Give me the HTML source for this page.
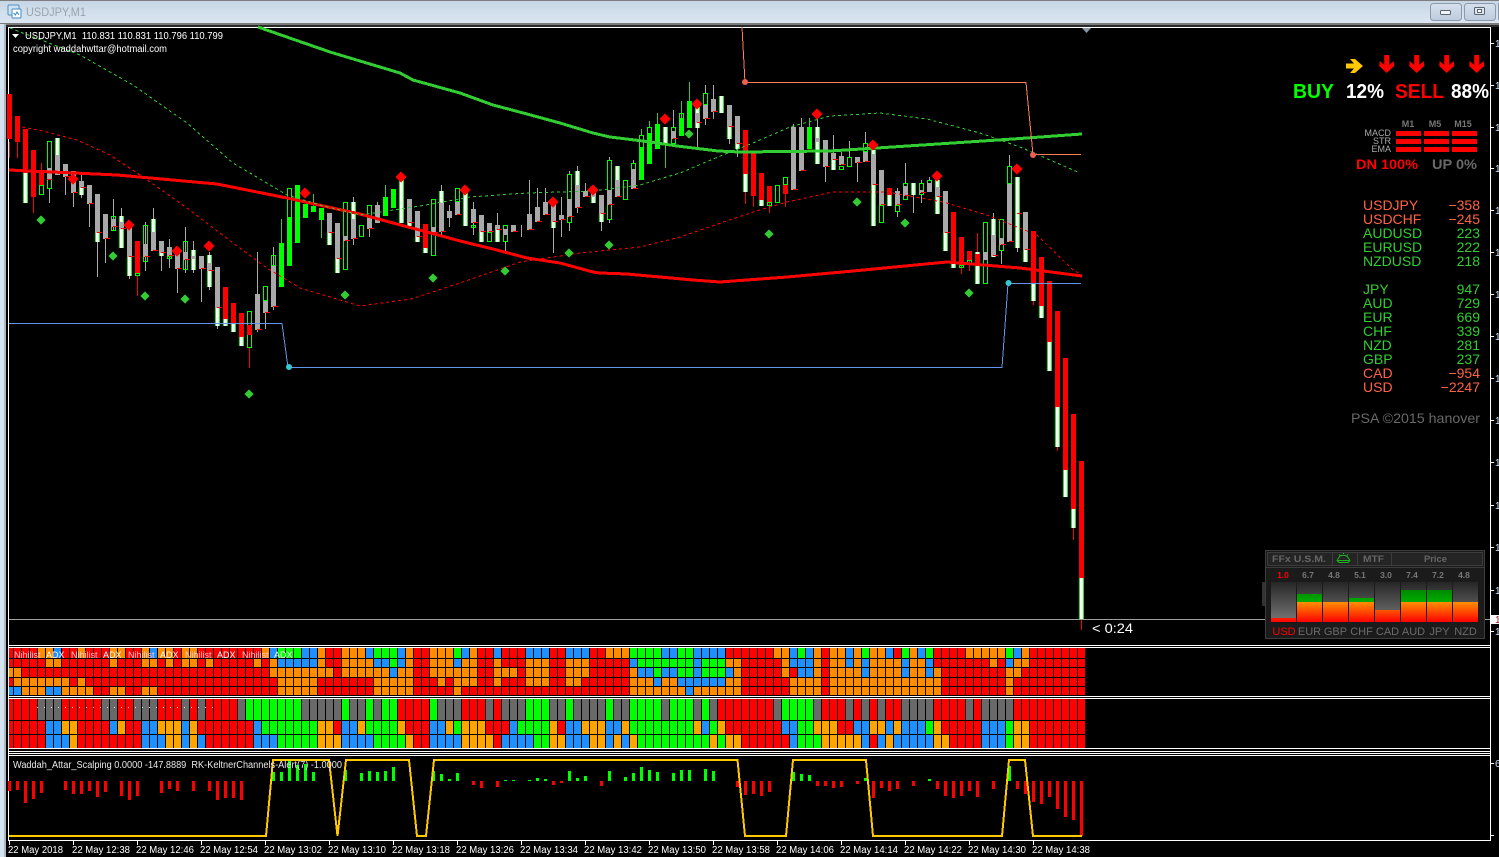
<!DOCTYPE html>
<html lang="en">
<head>
<meta charset="utf-8">
<title>USDJPY,M1</title>
<style>
html,body{margin:0;padding:0;background:#000;width:1499px;height:857px;overflow:hidden}
svg{display:block;font-family:"Liberation Sans",Arial,sans-serif}
.c{shape-rendering:crispEdges}
path{fill:none}
</style>
</head>
<body>
<svg xmlns="http://www.w3.org/2000/svg" width="1499" height="857" viewBox="0 0 1499 857">
<defs>
<linearGradient id="tb" x1="0" y1="0" x2="0" y2="1"><stop offset="0" stop-color="#c6d5e5"/><stop offset="1" stop-color="#dce7f2"/></linearGradient>
<linearGradient id="btn" x1="0" y1="0" x2="0" y2="1"><stop offset="0" stop-color="#d6e1ed"/><stop offset="1" stop-color="#bccbdc"/></linearGradient>
<linearGradient id="bg" gradientUnits="userSpaceOnUse" x1="0" y1="582" x2="0" y2="622"><stop offset="0" stop-color="#262626"/><stop offset="1" stop-color="#787878"/></linearGradient>
<linearGradient id="or" gradientUnits="userSpaceOnUse" x1="0" y1="602" x2="0" y2="622"><stop offset="0" stop-color="#ff9000"/><stop offset="1" stop-color="#ff0000"/></linearGradient>
<linearGradient id="gn" gradientUnits="userSpaceOnUse" x1="0" y1="590" x2="0" y2="602"><stop offset="0" stop-color="#008a00"/><stop offset="1" stop-color="#00ac00"/></linearGradient>
<path id="wg" d="M25.5 173V203M57.5 138V155M81.5 188V195M97.5 233V242M121.5 216V248M129.5 257V276M153.5 219V251M161.5 253V256M193.5 250V270M209.5 255V287M217.5 308V326M225.5 319V326M233.5 324V332M241.5 337V346M329.5 233V245M337.5 259V273M353.5 202V219M401.5 180V223M409.5 223V226M417.5 237V242M425.5 248V253M441.5 191V203M449.5 211V218M465.5 191V226M481.5 232V242M497.5 225V242M553.5 222V228M577.5 171V185M593.5 197V203M601.5 214V222M617.5 166V180M665.5 127V144M697.5 107V128M721.5 96V113M729.5 127V139M737.5 144V149M745.5 174V192M761.5 200V206M817.5 127V164M833.5 160V170M873.5 150V226M889.5 195V206M913.5 183V195M937.5 180V214M945.5 233V251M953.5 263V268M977.5 252V284M993.5 219V257M1017.5 177V248M1025.5 250V262M1033.5 284V301M1041.5 306V318M1049.5 342V371M1057.5 407V447M1065.5 470V497M1073.5 509V528M1081.5 578V619"/>
</defs>

<!-- window chrome -->
<rect width="1499" height="857" fill="#000"/>
<rect width="1499" height="24" fill="url(#tb)"/>
<rect width="1499" height="1" y="0" fill="#7d7d7d"/>
<rect y="23" width="1499" height="2" fill="#7a7a7a"/>
<rect y="25" width="1499" height="2" fill="#2a2a2a"/>
<rect x="0" y="24" width="4" height="833" fill="#d4e1ef"/>
<rect x="4" y="24" width="2" height="833" fill="#aab6c4"/>
<g>
<rect x="8" y="5" width="11" height="10" rx="1" fill="#cfe2f2" stroke="#4f93bf"/>
<rect x="12" y="9" width="9" height="9" rx="1" fill="#fff" stroke="#3f8ac0"/>
<path d="M13.5 13l2 2 1.500-3 2 3" stroke="#3f8ac0"/>
</g>
<text x="26" y="16" font-size="12" fill="#9aa4ae" textLength="60" lengthAdjust="spacingAndGlyphs">USDJPY,M1</text>
<rect x="1430.500" y="3.500" width="31" height="17" rx="3" fill="url(#btn)" stroke="#8c99a8"/>
<rect x="1440.500" y="10.500" width="10" height="4" rx="1" fill="#f2f5f8" stroke="#5a6470"/>
<rect x="1464.500" y="3.500" width="31" height="17" rx="3" fill="url(#btn)" stroke="#8c99a8"/>
<rect x="1474.500" y="7.500" width="10" height="7" rx="1" fill="#dfe7ef" stroke="#5a6470"/>
<rect x="1477.500" y="9.500" width="4" height="3" fill="#fff" stroke="#5a6470"/>
<rect x="1498" y="3" width="1" height="17" fill="#8c99a8"/>

<!-- frame lines -->
<g class="c" fill="#fff">
<rect x="8" y="27" width="1483" height="1"/>
<rect x="8" y="27" width="1" height="814"/>
<rect x="1490" y="27" width="1" height="814"/>
<rect x="8" y="645" width="1483" height="1"/>
<rect x="8" y="647" width="1483" height="1"/>
<rect x="8" y="696" width="1483" height="1"/>
<rect x="8" y="698" width="1483" height="1"/>
<rect x="8" y="748" width="1483" height="1"/>
<rect x="8" y="751" width="1483" height="1"/>
<rect x="8" y="753" width="1483" height="1"/>
<rect x="8" y="755" width="1483" height="1"/>
<rect x="8" y="840" width="1483" height="1"/>
</g>

<!-- candles -->
<g class="c">
<path stroke="#a9a9a9" d="M49.500 189V203M65.500 177V195M73.500 193V207M81.500 175V198M89.500 204V227M97.500 242V277M105.500 239V263M113.500 199V231M121.500 208V216M129.500 276V279M145.500 222V271M153.500 208V219M161.500 253V271M169.500 239V268M177.500 269V293M185.500 227V273M193.500 241V273M201.500 269V302M209.500 252V290M217.500 326V329M257.500 252V332M265.500 313V329M273.500 247V310M353.500 197V245M369.500 229V237M377.500 202V205M441.500 185V191M441.500 232V235M449.500 205V227M473.500 202V235M497.500 213V225M505.500 242V251M521.500 225V237M529.500 180V214M537.500 188V207M545.500 188V202M553.500 228V253M561.500 197V237M569.500 171V174M569.500 223V231M577.500 166V171M577.500 208V213M585.500 183V191M601.500 222V231M609.500 157V160M609.500 220V223M633.500 160V163M673.500 110V127M697.500 128V150M705.500 85V93M705.500 119V125M713.500 85V99M713.500 112V119M729.500 139V144M737.500 144V157M793.500 124V127M801.500 118V127M817.500 118V127M825.500 167V182M833.500 135V153M841.500 152V156M849.500 141V157M857.500 163V182M865.500 132V143M897.500 188V191M897.500 212V217M905.500 163V183M913.500 195V213M921.500 180V183M921.500 195V203M929.500 177V180M993.500 213V219M1001.500 251V264M1009.500 155V166M1017.500 248V252"/>
<path stroke="#f00" d="M9.500 142V158M17.500 142V158M33.500 197V213M41.500 163V173M137.500 276V296M249.500 348V368M745.500 192V204M753.500 196V207M769.500 202V213M785.500 194V207M961.500 264V274M969.500 251V271M977.500 233V252M1033.500 301V305M1057.500 447V451M1073.500 528V540M1081.500 619V630"/>
<path stroke="#32cd32" d="M281.500 219V243M313.500 194V206M321.500 220V238M385.500 185V197M641.500 129V135M649.500 121V127M657.500 113V124M665.500 144V168M681.500 101V119M689.500 82V101M809.500 118V127"/>

<path stroke="#0f0" d="M39.500 185.500h4V194.500h-4zM47.500 141.500h4V188.500h-4zM111.500 216.500h4V230.500h-4zM135.500 273.500h4V275.500h-4zM143.500 225.500h4V261.500h-4zM167.500 256.500h4V258.500h-4zM183.500 241.500h4V269.500h-4zM199.500 256.500h4V257.500h-4zM247.500 311.500h4V347.500h-4zM263.500 286.500h4V300.500h-4zM271.500 255.500h4V265.500h-4zM287.500 188.500h4V217.500h-4zM343.500 202.500h4V269.500h-4zM359.500 225.500h4V236.500h-4zM367.500 205.500h4V219.500h-4zM431.500 199.500h4V255.500h-4zM455.500 188.500h4V201.500h-4zM471.500 225.500h4V227.500h-4zM487.500 232.500h4V241.500h-4zM503.500 225.500h4V241.500h-4zM567.500 174.500h4V222.500h-4zM607.500 160.500h4V219.500h-4zM623.500 180.500h4V199.500h-4zM631.500 163.500h4V169.500h-4zM639.500 135.500h4V147.500h-4zM647.500 127.500h4V133.500h-4zM671.500 127.500h4V143.500h-4zM679.500 113.500h4V118.500h-4zM703.500 93.500h4V104.500h-4zM767.500 202.500h4V205.500h-4zM775.500 185.500h4V202.500h-4zM783.500 177.500h4V184.500h-4zM791.500 127.500h4V189.500h-4zM839.500 166.500h4V169.500h-4zM847.500 157.500h4V166.500h-4zM863.500 143.500h4V151.500h-4zM879.500 205.500h4V222.500h-4zM895.500 205.500h4V211.500h-4zM903.500 183.500h4V199.500h-4zM919.500 183.500h4V194.500h-4zM927.500 180.500h4V183.500h-4zM959.500 265.500h4V267.500h-4zM967.500 260.500h4V264.500h-4zM983.500 222.500h4V283.500h-4zM999.500 219.500h4V250.500h-4zM1007.500 166.500h4V183.500h-4z"/>
<use href="#wg" stroke="#0f0" stroke-width="5"/>
<use href="#wg" stroke="#fff" stroke-width="3"/>

<path stroke="#a9a9a9" stroke-width="5" d="M49.500 168V179M57.500 155V175M65.500 164V177M73.500 171V193M81.500 181V188M89.500 185V204M97.500 194V233M105.500 214V239M113.500 219V227M121.500 222V229M129.500 227V257M145.500 244V257M153.500 232V251M161.500 241V253M169.500 247V256M177.500 252V269M185.500 252V260M193.500 256V259M201.500 256V269M209.500 263V271M217.500 267V308M257.500 294V330M265.500 301V313M273.500 266V307M329.500 213V233M337.500 223V259M345.500 236V241M353.500 219V239M369.500 218V229M377.500 205V223M409.500 199V223M417.500 211V237M433.500 227V233M441.500 203V232M449.500 211V218M457.500 202V215M473.500 209V223M481.500 215V232M489.500 223V232M497.500 225V230M505.500 229V235M513.500 225V232M529.500 214V230M537.500 207V222M545.500 202V215M553.500 204V222M561.500 215V220M569.500 199V217M577.500 185V208M585.500 191V197M593.500 193V197M601.500 195V214M609.500 190V205M617.500 180V197M633.500 169V189M673.500 131V139M697.500 113V123M705.500 105V119M713.500 99V112M729.500 105V127M737.500 116V144M793.500 127V190M801.500 127V171M817.500 138V142M825.500 140V167M833.500 153V160M841.500 156V165M857.500 157V163M865.500 152V162M873.500 154V185M881.500 170V205M897.500 191V205M905.500 186V196M921.500 190V193M929.500 183V192M937.500 187V197M945.500 191V233M985.500 252V260M993.500 235V256M1001.500 238V245M1009.500 184V242M1025.500 212V250"/>
<path stroke="#f00" d="M47 179.500h5M65 176.500h5M73 192.500h5M81 187.500h5M89 203.500h5M97 232.500h5M105 238.500h5M113 226.500h5M121 228.500h5M129 256.500h5M145 256.500h5M153 250.500h5M161 252.500h5M169 255.500h5M177 268.500h5M185 259.500h5M201 268.500h5M209 270.500h5M217 307.500h5M257 329.500h5M265 312.500h5M273 306.500h5M329 232.500h5M337 258.500h5M345 240.500h5M353 238.500h5M369 228.500h5M409 222.500h5M417 236.500h5M433 232.500h5M441 231.500h5M457 214.500h5M473 222.500h5M481 231.500h5M489 231.500h5M497 229.500h5M513 231.500h5M529 229.500h5M537 221.500h5M545 214.500h5M553 221.500h5M561 219.500h5M569 216.500h5M577 207.500h5M585 196.500h5M601 213.500h5M609 204.500h5M617 196.500h5M633 188.500h5M673 138.500h5M697 122.500h5M705 118.500h5M713 111.500h5M729 126.500h5M737 143.500h5M793 189.500h5M801 170.500h5M825 166.500h5M833 159.500h5M841 164.500h5M857 162.500h5M865 161.500h5M873 184.500h5M881 204.500h5M897 204.500h5M905 195.500h5M921 192.500h5M937 196.500h5M945 232.500h5M993 255.500h5M1001 244.500h5M1009 241.500h5M1017 213.500h5M1025 249.500h5"/>
<path stroke="#f00" stroke-width="5" d="M9.500 94V139M17.500 116V142M25.500 129V173M33.500 150V197M41.500 173V185M137.500 241V273M225.500 287V319M233.500 303V324M241.500 313V337M249.500 325V335M425.500 224V248M745.500 130V174M753.500 153V196M761.500 173V200M769.500 186V202M785.500 185V194M889.500 188V195M953.500 212V263M961.500 237V265M969.500 251V260M977.500 254V263M1033.500 231V284M1041.500 257V306M1049.500 281V342M1057.500 311V407M1065.500 358V470M1073.500 414V509M1081.500 461V578"/>
<path stroke="#0f0" stroke-width="5" d="M281.500 243V287M289.500 218V266M297.500 185V243M305.500 204V218M313.500 206V212M321.500 208V220M385.500 197V216M393.500 189V208M641.500 148V180M649.500 133V164M657.500 124V149M681.500 119V136M689.500 101V128M809.500 127V149"/>
</g>

<!-- moving averages and bands -->
<g class="c">
<path stroke="#32cd32" stroke-width="3" d="M258 27L330 52L400 73L413 80L460 93L493 105L527 114L560 123L593 133L610 137L643 141L677 146L718 151L740 152L830 151L877 148L953 143L1013 139L1082 134"/>
<path stroke="#f00" stroke-width="3" d="M9 170L117 175L217 184L287 198L360 214L393 223L427 232L460 241L493 249L527 258L560 263L593 272L600 273L627 274L660 277L693 280L720 282L787 277L853 271L947 262L1020 268L1082 276"/>
<path stroke="#32cd32" stroke-dasharray="3 3" d="M10 28L80 55L133 85L187 123L233 163L287 195L320 205L360 215L420 206L470 197L527 193L593 191L640 185L680 173L718 157L753 143L790 127L830 116L880 113L927 119L980 133L1020 147L1080 173"/>
<path stroke="#f00" stroke-dasharray="3 3" d="M22 127L43 131L77 140L110 155L143 177L187 208L233 243L267 268L300 288L360 306L411 299L460 283L520 262L580 253L640 247L680 237L718 224L753 212L787 202L833 192L887 192L943 202L987 215L1037 235L1073 270L1082 275"/>
<path stroke="#ff7f50" d="M742 27L745 82.500H1026L1033 154.500H1081"/>
<path stroke="#6495ed" d="M9 323.500H282L288 367.500H1002L1008 283.500H1081"/>
</g>
<circle cx="745" cy="82" r="3" fill="#f0604f"/>
<circle cx="1033" cy="155" r="3" fill="#f0604f"/>
<circle cx="289" cy="367" r="3" fill="#35c8d2"/>
<circle cx="1008.500" cy="283" r="3" fill="#35c8d2"/>

<!-- arrows -->
<g fill="#f00" stroke="#f00" stroke-width=".8">
<polygon points="73,174 78,179 73,184 68,179"/><polygon points="129,220 134,225 129,230 124,225"/><polygon points="177,246 182,251 177,256 172,251"/><polygon points="209,241 214,246 209,251 204,246"/><polygon points="305,188 310,193 305,198 300,193"/><polygon points="401,172 406,177 401,182 396,177"/><polygon points="465,185 470,190 465,195 460,190"/><polygon points="553,197 558,202 553,207 548,202"/><polygon points="593,185 598,190 593,195 588,190"/><polygon points="665,114 670,119 665,124 660,119"/><polygon points="697,99 702,104 697,109 692,104"/><polygon points="817,109 822,114 817,119 812,114"/><polygon points="873,140 878,145 873,150 868,145"/><polygon points="937,171 942,176 937,181 932,176"/><polygon points="1017,164 1022,169 1017,174 1012,169"/>
</g>
<g fill="#32cd32" stroke="#32cd32" stroke-width=".8">
<polygon points="41,216 45,220 41,224 37,220"/><polygon points="113,252 117,256 113,260 109,256"/><polygon points="145,292 149,296 145,300 141,296"/><polygon points="185,295 189,299 185,303 181,299"/><polygon points="249,390 253,394 249,398 245,394"/><polygon points="345,291 349,295 345,299 341,295"/><polygon points="433,274 437,278 433,282 429,278"/><polygon points="505,267 509,271 505,275 501,271"/><polygon points="569,249 573,253 569,257 565,253"/><polygon points="609,241 613,245 609,249 605,245"/><polygon points="689,130 693,134 689,138 685,134"/><polygon points="769,230 773,234 769,238 765,234"/><polygon points="857,198 861,202 857,206 853,202"/><polygon points="905,219 909,223 905,227 901,223"/><polygon points="969,289 973,293 969,297 965,293"/>
</g>

<polygon points="1082,28 1091,28 1086.500,33" fill="#8796a6"/>

<!-- chart labels -->
<polygon points="12,34 19,34 15.500,38" fill="#fff"/>
<text x="25" y="39" font-size="10" fill="#fff" textLength="198" lengthAdjust="spacingAndGlyphs" xml:space="preserve">USDJPY,M1  110.831 110.831 110.796 110.799</text>
<text x="13" y="52" font-size="10" fill="#fff" textLength="154" lengthAdjust="spacingAndGlyphs">copyright waddahwttar@hotmail.com</text>

<rect class="c" x="9" y="619" width="1481" height="1" fill="#a0a0a0"/>
<text x="1092" y="633" font-size="14" fill="#fff" textLength="41" lengthAdjust="spacingAndGlyphs">&lt; 0:24</text>

<!-- right signal panel -->
<polygon points="1346,63.500 1354,63.500 1350,59 1355,59 1363,66 1355,73 1350,73 1354,68.500 1346,68.500" fill="#ffc800"/>
<g fill="#f00">
<polygon points="1384.200,55 1389.200,55 1389.200,65 1393.700,61 1394.200,66 1386.700,73 1379.200,66 1379.700,61 1384.200,65"/>
<polygon points="1414.200,55 1419.200,55 1419.200,65 1423.700,61 1424.200,66 1416.700,73 1409.200,66 1409.700,61 1414.200,65"/>
<polygon points="1444.200,55 1449.200,55 1449.200,65 1453.700,61 1454.200,66 1446.700,73 1439.200,66 1439.700,61 1444.200,65"/>
<polygon points="1474.200,55 1479.200,55 1479.200,65 1483.700,61 1484.200,66 1476.700,73 1469.200,66 1469.700,61 1474.200,65"/>
</g>
<g font-size="20" font-weight="bold">
<text x="1293" y="98" fill="#0f0" textLength="41" lengthAdjust="spacingAndGlyphs">BUY</text>
<text x="1346" y="98" fill="#fff" textLength="38" lengthAdjust="spacingAndGlyphs">12%</text>
<text x="1395" y="98" fill="#f00" textLength="49" lengthAdjust="spacingAndGlyphs">SELL</text>
<text x="1451" y="98" fill="#fff" textLength="38" lengthAdjust="spacingAndGlyphs">88%</text>
</g>
<g font-size="9" font-weight="bold" fill="#777" text-anchor="middle">
<text x="1408" y="127">M1</text><text x="1435" y="127">M5</text><text x="1463" y="127">M15</text>
</g>
<g font-size="9" fill="#aaa" text-anchor="end">
<text x="1391" y="136">MACD</text><text x="1391" y="144">STR</text><text x="1391" y="152">EMA</text>
</g>
<g class="c" fill="#f00">
<rect x="1396" y="131" width="25" height="5"/><rect x="1424" y="131" width="25" height="5"/><rect x="1452" y="131" width="25" height="5"/>
<rect x="1396" y="139" width="25" height="5"/><rect x="1424" y="139" width="25" height="5"/><rect x="1452" y="139" width="25" height="5"/>
<rect x="1396" y="147" width="25" height="5"/><rect x="1424" y="147" width="25" height="5"/><rect x="1452" y="147" width="25" height="5"/>
</g>
<g font-size="14" font-weight="bold">
<text x="1356" y="169" fill="#f00" textLength="62" lengthAdjust="spacingAndGlyphs">DN 100%</text>
<text x="1432" y="169" fill="#696969" textLength="45" lengthAdjust="spacingAndGlyphs">UP 0%</text>
</g>
<g font-size="14" fill="#ff6347">
<text x="1363" y="210">USDJPY</text><text x="1363" y="224">USDCHF</text>
<text x="1363" y="378">CAD</text><text x="1363" y="392">USD</text>
<g text-anchor="end"><text x="1480" y="210">−358</text><text x="1480" y="224">−245</text><text x="1480" y="378">−954</text><text x="1480" y="392">−2247</text></g>
</g>
<g font-size="14" fill="#32cd32">
<text x="1363" y="238">AUDUSD</text><text x="1363" y="252">EURUSD</text><text x="1363" y="266">NZDUSD</text>
<text x="1363" y="294">JPY</text><text x="1363" y="308">AUD</text><text x="1363" y="322">EUR</text><text x="1363" y="336">CHF</text><text x="1363" y="350">NZD</text><text x="1363" y="364">GBP</text>
<g text-anchor="end"><text x="1480" y="238">223</text><text x="1480" y="252">222</text><text x="1480" y="266">218</text><text x="1480" y="294">947</text><text x="1480" y="308">729</text><text x="1480" y="322">669</text><text x="1480" y="336">339</text><text x="1480" y="350">281</text><text x="1480" y="364">237</text></g>
</g>
<text x="1351" y="423" font-size="14" fill="#696969" textLength="129" lengthAdjust="spacingAndGlyphs">PSA ©2015 hanover</text>

<!-- FFx panel -->
<rect x="1262" y="582" width="4" height="24" rx="1" fill="#333"/>
<rect x="1265.500" y="550.500" width="219" height="88" fill="#1b1b1b" stroke="#3c3c3c"/>
<rect x="1267.500" y="552.500" width="215" height="13" fill="#242424" stroke="#3c3c3c"/>
<path class="c" stroke="#3c3c3c" d="M1332.500 553V565M1357.500 553V565M1391.500 553V565M1266 567.500H1484"/>
<g font-size="9.500" font-weight="bold" fill="#666">
<text x="1272" y="562" textLength="54" lengthAdjust="spacingAndGlyphs">FFx U.S.M.</text>
<text x="1363" y="562" textLength="21" lengthAdjust="spacingAndGlyphs">MTF</text>
<text x="1424" y="562" textLength="23" lengthAdjust="spacingAndGlyphs">Price</text>
</g>
<path stroke="#1fb51f" d="M1338 560.500h11M1339 557.500c1-3 7-3 9 0l2 3-2 2h-9l-2-2zM1343.500 553v1M1339 554.500l1 1M1348 554.500l-1 1"/>
<g font-size="8.500" font-weight="bold" fill="#777" text-anchor="middle">
<text x="1283" y="578" fill="#f00">1.0</text><text x="1308" y="578">6.7</text><text x="1334" y="578">4.8</text><text x="1360" y="578">5.1</text><text x="1386" y="578">3.0</text><text x="1412" y="578">7.4</text><text x="1438" y="578">7.2</text><text x="1464" y="578">4.8</text>
</g>
<g class="c">
<g fill="url(#bg)">
<rect x="1271" y="582" width="25" height="40"/><rect x="1297" y="582" width="25" height="40"/><rect x="1323" y="582" width="25" height="40"/><rect x="1349" y="582" width="25" height="40"/><rect x="1375" y="582" width="25" height="40"/><rect x="1401" y="582" width="25" height="40"/><rect x="1427" y="582" width="25" height="40"/><rect x="1453" y="582" width="25" height="40"/>
</g>
<g fill="url(#gn)">
<rect x="1297" y="594" width="25" height="8"/><rect x="1349" y="598" width="25" height="4"/><rect x="1401" y="590" width="25" height="12"/><rect x="1427" y="590" width="25" height="12"/>
</g>
<g fill="url(#or)">
<rect x="1271" y="618" width="25" height="4"/><rect x="1297" y="602" width="25" height="20"/><rect x="1323" y="602" width="25" height="20"/><rect x="1349" y="602" width="25" height="20"/><rect x="1375" y="610" width="25" height="12"/><rect x="1401" y="602" width="25" height="20"/><rect x="1427" y="602" width="25" height="20"/><rect x="1453" y="602" width="25" height="20"/>
</g>
</g>
<g font-size="11" fill="#6a6a6a" text-anchor="middle">
<text x="1284" y="635" fill="#f00">USD</text><text x="1309.500" y="635">EUR</text><text x="1335.500" y="635">GBP</text><text x="1361.500" y="635">CHF</text><text x="1387.500" y="635">CAD</text><text x="1413.500" y="635">AUD</text><text x="1439.500" y="635">JPY</text><text x="1465.500" y="635">NZD</text>
</g>

<!-- heatmap 1 -->
<g class="c">
<rect x="9" y="648" width="1077" height="48" fill="#f00"/>
<path stroke="#ff8c00" stroke-width="10" d="M38 653h16M78 653h8M110 653h16M142 653h8M158 653h16M182 653h16M262 653h8M318 653h8M342 653h24M406 653h8M430 653h24M470 653h8M606 653h24M774 653h16M814 653h8M830 653h16M854 653h8M870 653h16M910 653h8M966 653h40M1022 653h8"/>
<path stroke="#1e90ff" stroke-width="10" d="M54 653h8M150 653h8M270 653h8M302 653h16M366 653h8M398 653h8M462 653h8M494 653h8M526 653h24M566 653h24M662 653h16M694 653h32M790 653h8M806 653h8M846 653h8M886 653h8M918 653h8M1014 653h8"/>
<path stroke="#0f0" stroke-width="10" d="M278 653h24M374 653h24M454 653h8M630 653h32M678 653h16M798 653h8M862 653h8M902 653h8M926 653h8M1006 653h8"/>

<path stroke="#ff8c00" stroke-width="9" d="M46 662.500h16M110 662.500h8M142 662.500h16M166 662.500h8M182 662.500h16M206 662.500h8M254 662.500h8M270 662.500h8M318 662.500h8M342 662.500h24M366 662.500h8M406 662.500h8M430 662.500h24M462 662.500h16M494 662.500h8M526 662.500h24M566 662.500h24M726 662.500h16M782 662.500h8M814 662.500h8M830 662.500h16M854 662.500h8M870 662.500h32M910 662.500h16M990 662.500h8M1014 662.500h16"/>
<path stroke="#1e90ff" stroke-width="9" d="M278 662.500h40M374 662.500h16M398 662.500h8M454 662.500h8M630 662.500h8M694 662.500h8M790 662.500h24M846 662.500h8M862 662.500h8M902 662.500h8M926 662.500h8M1006 662.500h8"/>
<path stroke="#0f0" stroke-width="9" d="M390 662.500h8M638 662.500h56M702 662.500h24"/>

<path stroke="#ff8c00" stroke-width="10" d="M9 672h13M270 672h64M342 672h48M398 672h16M430 672h48M494 672h24M526 672h24M566 672h24M630 672h8M734 672h8M782 672h8M814 672h8M830 672h32M870 672h32M910 672h16M934 672h8M1006 672h16"/>
<path stroke="#1e90ff" stroke-width="10" d="M390 672h8M638 672h16M662 672h16M694 672h8M726 672h8M798 672h16M862 672h8M902 672h8M926 672h8"/>
<path stroke="#0f0" stroke-width="10" d="M654 672h8M678 672h16M702 672h24"/>

<path stroke="#ff8c00" stroke-width="9" d="M14 681.500h56M78 681.500h8M278 681.500h40M374 681.500h40M438 681.500h8M454 681.500h24M494 681.500h8M526 681.500h24M566 681.500h16M630 681.500h24M662 681.500h16M726 681.500h16M790 681.500h32M830 681.500h112M1006 681.500h8"/>
<path stroke="#1e90ff" stroke-width="9" d="M654 681.500h8M678 681.500h48"/>

<path stroke="#ff8c00" stroke-width="9" d="M22 690.500h24M62 690.500h32M110 690.500h16M142 690.500h16M278 690.500h40M374 690.500h40M454 690.500h8M630 690.500h56M694 690.500h48M790 690.500h32M830 690.500h112M1006 690.500h8"/>
<path stroke="#1e90ff" stroke-width="9" d="M9 690.500h13M46 690.500h16M686 690.500h8"/>

<rect x="9" y="695" width="1077" height="1" fill="#000"/>
<path stroke="#000" d="M9 658.500H1086M9 667.500H1086M9 677.500H1086M9 686.500H1086"/>
<path stroke="#000" stroke-width="48" stroke-dasharray="1 7" d="M13 672H1086"/>
</g>
<g font-size="9">
<text x="14" y="658" fill="#ffc4d0">Nihilist</text><text x="46" y="658" fill="#fff">ADX</text>
<text x="71" y="658" fill="#ffc4d0">Nihilist</text><text x="103" y="658" fill="#fff">ADX</text>
<text x="128" y="658" fill="#ffc4d0">Nihilist</text><text x="160" y="658" fill="#fff">ADX</text>
<text x="185" y="658" fill="#ffc4d0">Nihilist</text><text x="217" y="658" fill="#fff">ADX</text>
<text x="242" y="658" fill="#ffc4d0">Nihilist</text><text x="274" y="658" fill="#fff">ADX</text>
</g>

<!-- heatmap 2 -->
<g class="c">
<rect x="9" y="699" width="1077" height="49" fill="#f00"/>
<path stroke="#696969" stroke-width="21" d="M38 709.500h24M102 709.500h16M134 709.500h24M182 709.500h8M198 709.500h8M238 709.500h8M302 709.500h40M350 709.500h16M374 709.500h8M438 709.500h24M486 709.500h8M502 709.500h24M550 709.500h16M574 709.500h32M614 709.500h16M662 709.500h8M694 709.500h8M710 709.500h8M774 709.500h8M814 709.500h8M846 709.500h8M862 709.500h8M878 709.500h8M902 709.500h32M966 709.500h8M982 709.500h32"/>
<path stroke="#0f0" stroke-width="21" d="M246 709.500h56M342 709.500h8M366 709.500h8M382 709.500h16M430 709.500h8M526 709.500h24M566 709.500h8M606 709.500h8M630 709.500h32M670 709.500h24M702 709.500h8M782 709.500h32"/>

<path stroke="#ffa500" stroke-width="13" d="M62 727.500h16M118 727.500h8M158 727.500h24M190 727.500h8M318 727.500h16M358 727.500h8M398 727.500h8M446 727.500h8M462 727.500h24M550 727.500h8M582 727.500h24M622 727.500h8M694 727.500h8M718 727.500h8M814 727.500h24M870 727.500h16M894 727.500h8M934 727.500h8M1014 727.500h16"/>
<path stroke="#1e90ff" stroke-width="13" d="M46 727.500h16M110 727.500h8M142 727.500h16M182 727.500h8M254 727.500h8M342 727.500h16M430 727.500h16M510 727.500h8M566 727.500h16M606 727.500h16M702 727.500h8M782 727.500h16M854 727.500h16M886 727.500h8M902 727.500h24M982 727.500h24"/>
<path stroke="#0f0" stroke-width="13" d="M262 727.500h56M366 727.500h32M454 727.500h8M518 727.500h32M630 727.500h64M710 727.500h8M798 727.500h16M926 727.500h8M1006 727.500h8"/>

<path stroke="#ffa500" stroke-width="13" d="M70 741.500h8M166 741.500h16M190 741.500h8M318 741.500h24M406 741.500h8M462 741.500h32M550 741.500h16M590 741.500h16M614 741.500h8M630 741.500h8M710 741.500h8M726 741.500h16M822 741.500h40M886 741.500h8M934 741.500h16M1014 741.500h16"/>
<path stroke="#1e90ff" stroke-width="13" d="M46 741.500h24M142 741.500h24M182 741.500h8M198 741.500h8M254 741.500h24M342 741.500h32M430 741.500h32M502 741.500h32M566 741.500h24M606 741.500h8M622 741.500h8M790 741.500h8M862 741.500h8M878 741.500h8M894 741.500h40M982 741.500h24"/>
<path stroke="#0f0" stroke-width="13" d="M278 741.500h40M374 741.500h32M534 741.500h16M638 741.500h72M718 741.500h8M798 741.500h24M1006 741.500h8"/>

<path stroke="#000" d="M9 720.500H1086M9 734.500H1086"/>
<path stroke="#000" stroke-width="49" stroke-dasharray="1 7" d="M13 723.500H1086"/>
<path stroke="#e8e8e8" stroke-dasharray="1 6" d="M37 707.500H215"/>
</g>

<!-- histogram -->
<g class="c">
<path stroke="#f00" stroke-width="3" d="M9.500 781V791M17.500 781V790M25.500 781V803M33.500 781V799M41.500 781V793M65.500 781V790M73.500 781V794M81.500 781V794M89.500 781V791M97.500 781V797M105.500 781V792M121.500 781V796M129.500 781V800M137.500 781V796M161.500 781V793M169.500 781V789M177.500 781V791M193.500 781V791M209.500 781V791M217.500 781V800M225.500 781V798M233.500 781V798M241.500 781V800M473.500 781V785M481.500 781V788M497.500 781V787M553.500 781V785M561.500 781V783M601.500 781V786M737.500 781V787M745.500 781V795M753.500 781V794M761.500 781V796M769.500 781V792M817.500 781V786M825.500 781V786M833.500 781V788M841.500 781V787M857.500 781V784M873.500 781V798M881.500 781V788M889.500 781V791M897.500 781V789M913.500 781V786M937.500 781V789M945.500 781V796M953.500 781V798M961.500 781V796M969.500 781V791M977.500 781V797M993.500 781V789M1017.500 781V789M1025.500 781V794M1033.500 781V802M1041.500 781V804M1049.500 781V797M1057.500 781V809M1065.500 781V817M1073.500 781V820M1081.500 781V836"/>
<path stroke="#0f0" stroke-width="3" d="M273.500 772V781M281.500 772V781M289.500 761V781M297.500 765V781M305.500 764V781M313.500 772V781M345.500 770V781M361.500 773V781M369.500 771V781M377.500 772V781M385.500 771V781M393.500 767V781M433.500 771V781M441.500 774V781M449.500 779V781M457.500 773V781M505.500 780V781M513.500 780V781M529.500 780V781M537.500 778V781M545.500 779V781M569.500 771V781M577.500 778V781M585.500 776V781M609.500 771V781M625.500 777V781M633.500 773V781M641.500 767V781M649.500 770V781M657.500 772V781M673.500 773V781M681.500 770V781M689.500 770V781M705.500 769V781M713.500 771V781M793.500 772V781M801.500 774V781M809.500 775V781M865.500 778V781M929.500 779V781M1009.500 766V781"/>
</g>
<path class="c" stroke="#ffc800" stroke-width="2" d="M9 836H266L273 760H329L337.500 836L346 760H409L417 836H426L434 760H737.500L745 836H786L793 760H866L873 836H1002L1009 760H1025L1033 836H1082"/>
<text x="13" y="768" font-size="10" fill="#e8e8e8" textLength="329" lengthAdjust="spacingAndGlyphs" xml:space="preserve">Waddah_Attar_Scalping 0.0000 -147.8889  RK-KeltnerChannels-Alert(7) -1.0000</text>

<!-- time axis -->
<path class="c" stroke="#fff" d="M9.500 841V845M73.500 841V845M137.500 841V845M201.500 841V845M265.500 841V845M329.500 841V845M393.500 841V845M457.500 841V845M521.500 841V845M585.500 841V845M649.500 841V845M713.500 841V845M777.500 841V845M841.500 841V845M905.500 841V845M969.500 841V845M1033.500 841V845"/>
<g font-size="10" fill="#fff">
<text x="8" y="853" textLength="55" lengthAdjust="spacingAndGlyphs">22 May 2018</text>
<text x="72" y="853" textLength="58" lengthAdjust="spacingAndGlyphs">22 May 12:38</text>
<text x="136" y="853" textLength="58" lengthAdjust="spacingAndGlyphs">22 May 12:46</text>
<text x="200" y="853" textLength="58" lengthAdjust="spacingAndGlyphs">22 May 12:54</text>
<text x="264" y="853" textLength="58" lengthAdjust="spacingAndGlyphs">22 May 13:02</text>
<text x="328" y="853" textLength="58" lengthAdjust="spacingAndGlyphs">22 May 13:10</text>
<text x="392" y="853" textLength="58" lengthAdjust="spacingAndGlyphs">22 May 13:18</text>
<text x="456" y="853" textLength="58" lengthAdjust="spacingAndGlyphs">22 May 13:26</text>
<text x="520" y="853" textLength="58" lengthAdjust="spacingAndGlyphs">22 May 13:34</text>
<text x="584" y="853" textLength="58" lengthAdjust="spacingAndGlyphs">22 May 13:42</text>
<text x="648" y="853" textLength="58" lengthAdjust="spacingAndGlyphs">22 May 13:50</text>
<text x="712" y="853" textLength="58" lengthAdjust="spacingAndGlyphs">22 May 13:58</text>
<text x="776" y="853" textLength="58" lengthAdjust="spacingAndGlyphs">22 May 14:06</text>
<text x="840" y="853" textLength="58" lengthAdjust="spacingAndGlyphs">22 May 14:14</text>
<text x="904" y="853" textLength="58" lengthAdjust="spacingAndGlyphs">22 May 14:22</text>
<text x="968" y="853" textLength="58" lengthAdjust="spacingAndGlyphs">22 May 14:30</text>
<text x="1032" y="853" textLength="58" lengthAdjust="spacingAndGlyphs">22 May 14:38</text>
</g>

<!-- price scale -->
<path class="c" stroke="#fff" d="M1491 43.500h3M1491 85.500h3M1491 127.500h3M1491 168.500h3M1491 210.500h3M1491 252.500h3M1491 294.500h3M1491 336.500h3M1491 378.500h3M1491 420.500h3M1491 462.500h3M1491 505.500h3M1491 547.500h3M1491 590.500h3M1491 631.500h3M1491 763.500h3M1491 835.500h3"/>
<g font-size="10" fill="#cfe6ff">
<text x="1495" y="47">1</text><text x="1495" y="89">1</text><text x="1495" y="131">1</text><text x="1495" y="172">1</text><text x="1495" y="214">1</text><text x="1495" y="256">1</text><text x="1495" y="298">1</text><text x="1495" y="340">1</text><text x="1495" y="382">1</text><text x="1495" y="424">1</text><text x="1495" y="466">1</text><text x="1495" y="509">1</text><text x="1495" y="551">1</text><text x="1495" y="594">1</text><text x="1495" y="635">1</text><text x="1495" y="767">6</text>
</g>
<rect class="c" x="1491" y="615" width="8" height="9" fill="#fff"/>
<text x="1495" y="623" font-size="10" fill="#8b1a1a">1</text>
</svg>
</body>
</html>
